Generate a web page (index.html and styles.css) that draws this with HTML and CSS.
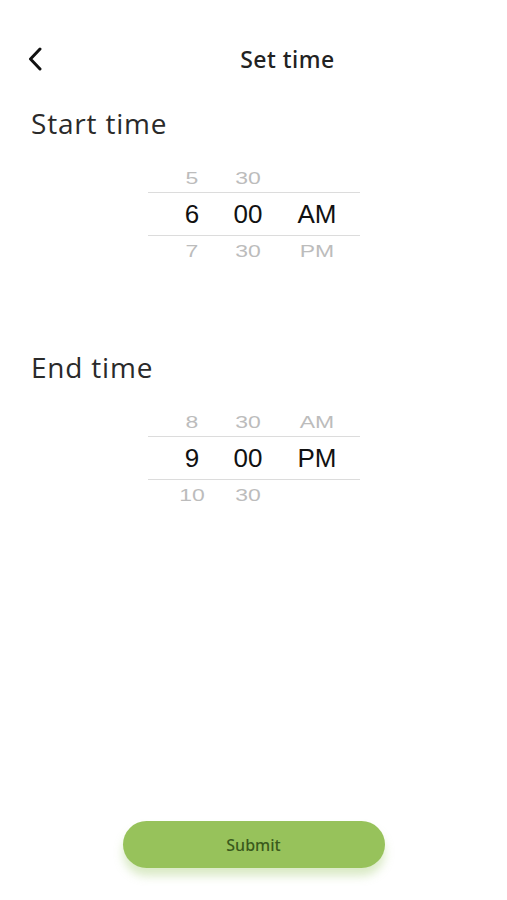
FILE: index.html
```html
<!DOCTYPE html>
<html>
<head>
<meta charset="utf-8">
<link rel="stylesheet" href="styles.css">
</head>
<body>
<div class="page">
  <header class="header">
    <button class="back" aria-label="Back">
      <svg width="16" height="24" viewBox="0 0 16 24"><path d="M13 2 L3.5 12 L13 22" fill="none" stroke="#111" stroke-width="3" stroke-linecap="round" stroke-linejoin="round"/></svg>
    </button>
    <h1 class="title">Set time</h1>
  </header>

  <section class="section">
    <h2 class="label">Start time</h2>
    <div class="picker">
      <div class="row side top"><span class="c1">5</span><span class="c2">30</span><span class="c3"></span></div>
      <div class="row sel"><span class="c1">6</span><span class="c2">00</span><span class="c3">AM</span></div>
      <div class="row side bottom"><span class="c1">7</span><span class="c2">30</span><span class="c3">PM</span></div>
    </div>
  </section>

  <section class="section end">
    <h2 class="label">End time</h2>
    <div class="picker">
      <div class="row side top"><span class="c1">8</span><span class="c2">30</span><span class="c3">AM</span></div>
      <div class="row sel"><span class="c1">9</span><span class="c2">00</span><span class="c3">PM</span></div>
      <div class="row side bottom"><span class="c1">10</span><span class="c2">30</span><span class="c3"></span></div>
    </div>
  </section>

  <div class="footer">
    <button class="submit">Submit</button>
  </div>
</div>
</body>
</html>
```

FILE: styles.css
```css
* { box-sizing: border-box; }
html, body { margin: 0; padding: 0; background: #fff; }
body { font-family: "Open Sans", "Liberation Sans", sans-serif; color: #222; }
.page {
  width: 507px;
  height: 900px;
  display: flex;
  flex-direction: column;
}
.header {
  position: relative;
  height: 58px;
  margin-top: 30px;
  display: flex;
  align-items: center;
  justify-content: center;
}
.back {
  position: absolute;
  left: 27px;
  top: 17px;
  background: none;
  border: 0;
  padding: 0;
  width: 16px;
  height: 24px;
}
.title {
  margin: 0 0 0 68px;
  font-family: "Noto Sans", "Open Sans", sans-serif;
  font-size: 23px;
  font-weight: 500;
  color: #222;
  letter-spacing: 0.5px;
}
.section { display: flex; flex-direction: column; }
.label {
  margin: 19px 0 0 31px;
  font-family: "Open Sans", sans-serif;
  font-weight: 400;
  font-size: 28px;
  line-height: 32px;
  letter-spacing: 0.8px;
  color: #2a2a2a;
}
.section.end .label { margin-top: 88px; }
.picker {
  margin: 26px 0 0 148px;
  width: 212px;
  display: flex;
  flex-direction: column;
  font-family: "Liberation Sans", Arial, sans-serif;
}
.row { position: relative; }
.row span { position: absolute; transform: translateX(-50%); }
.c1 { left: 44px; }
.c2 { left: 100px; }
.c3 { left: 169px; }
.sel {
  height: 44px;
  border-top: 1px solid #dcdcdc;
  border-bottom: 1px solid #dcdcdc;
  font-size: 26px;
  color: #111;
}
.sel span { top: 6px; line-height: 30px; }
.side {
  height: 27px;
  color: #bcbcbc;
  font-size: 23px;
  overflow: hidden;
}
.side span { line-height: 24px; }
.side.top span { top: 1px; transform: translateX(-50%) scaleY(0.74); }
.side.bottom span { top: 3px; transform: translateX(-50%) scaleY(0.74); }
.footer {
  margin-top: auto;
  padding-bottom: 32px;
  display: flex;
  justify-content: center;
}
.submit {
  width: 262px;
  height: 47px;
  border: 0;
  border-radius: 24px;
  background: #97c25b;
  color: #3a5a1c;
  font-family: "Noto Sans", "Open Sans", sans-serif;
  font-size: 16px;
  font-weight: 500;
  box-shadow: 0 8px 10px rgba(150, 194, 91, 0.35);
}
```
